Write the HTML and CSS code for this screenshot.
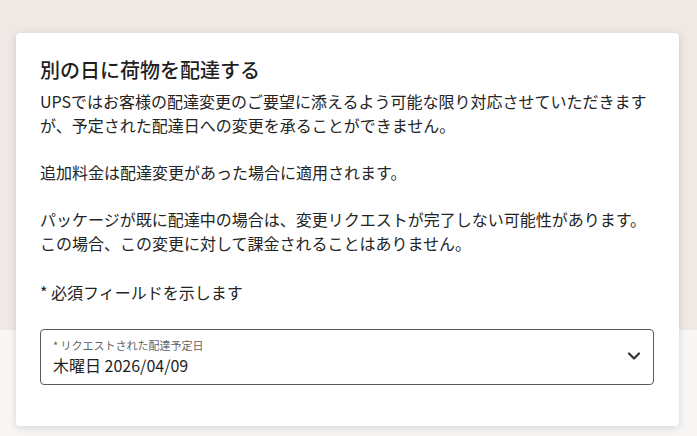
FILE: index.html
```html
<!DOCTYPE html>
<html lang="ja">
<head>
    <meta charset="UTF-8">
    <meta name="viewport" content="width=device-width, initial-scale=1.0">
    <title>別の日に荷物を配達する</title>
    <link rel="stylesheet" href="styles.css">
</head>
<body>
    <div class="page">
        <div class="card">
            <h2 class="card-title">別の日に荷物を配達する</h2>
            <p>UPSではお客様の配達変更のご要望に添えるよう可能な限り対応させていただきますが、予定された配達日への変更を承ることができません。</p>
            <p>追加料金は配達変更があった場合に適用されます。</p>
            <p>パッケージが既に配達中の場合は、変更リクエストが完了しない可能性があります。この場合、この変更に対して課金されることはありません。</p>
            <p class="required-note">* 必須フィールドを示します</p>
            <div class="select-field">
                <div class="select-text">
                    <span class="select-label">* リクエストされた配達予定日</span>
                    <span class="select-value">木曜日 2026/04/09</span>
                </div>
                <svg class="chevron" width="14" height="10" viewBox="0 0 14 10">
                    <path d="M2 2.5 L7 7.5 L12 2.5" fill="none" stroke="#333" stroke-width="2.2" stroke-linecap="round" stroke-linejoin="round"/>
                </svg>
            </div>
        </div>
    </div>
</body>
</html>
```

FILE: styles.css
```css
* {
    box-sizing: border-box;
}
body {
    margin: 0;
    font-family: "Noto Sans CJK JP", "Noto Sans", sans-serif;
    color: #242424;
    background: linear-gradient(#efe9e6 0, #efe9e6 330px, #f9f7f5 330px);
    min-height: 436px;
}
.page {
    padding: 33px 18px 0 16px;
}
.card {
    background-color: #ffffff;
    border-radius: 4px;
    box-shadow: 0 2px 8px rgba(0,0,0,0.14);
    padding: 22px 25px 41px 24px;
}
.card-title {
    margin: 0 0 4px;
    font-size: 20px;
    font-weight: 500;
    line-height: 30px;
    color: #1f1f1f;
}
.card p {
    margin: 0 0 23px;
    font-size: 16px;
    line-height: 24px;
}
.card .required-note {
    margin-top: 25px;
    margin-bottom: 25px;
}
.select-field {
    display: flex;
    align-items: center;
    justify-content: space-between;
    height: 56px;
    border: 1px solid #5a5a5a;
    border-radius: 4px;
    padding: 0 12px;
}
.select-text {
    display: flex;
    flex-direction: column;
}
.select-label {
    font-size: 11px;
    line-height: 16px;
    color: #5f5f5f;
}
.select-value {
    font-size: 16px;
    line-height: 24px;
    color: #1f1f1f;
}
.chevron {
    margin-top: -2px;
}
```
